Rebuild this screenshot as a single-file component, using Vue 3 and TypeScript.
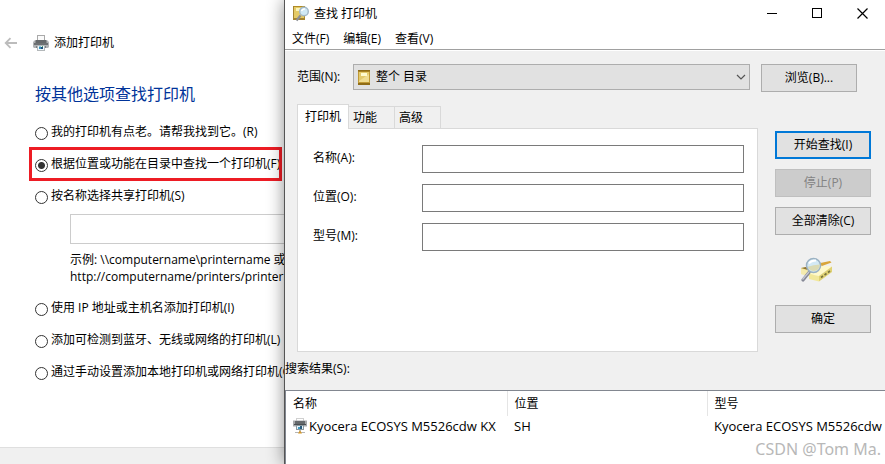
<script setup lang="ts">
import { ref } from 'vue'

interface Field {
  id: string
  label: string
}

interface Printer {
  name: string
  location: string
  model: string
}

const method = ref('directory')
const shareName = ref('')
const scope = ref('all')
const activeTab = ref('打印机')

const tabs = ['打印机', '功能', '高级']
const menus = ['文件(F)', '编辑(E)', '查看(V)']
const fields: Field[] = [
  { id: 'name', label: '名称(A):' },
  { id: 'location', label: '位置(O):' },
  { id: 'model', label: '型号(M):' },
]
const values = ref<Record<string, string>>({ name: '', location: '', model: '' })
const printers: Printer[] = [
  { name: 'Kyocera ECOSYS M5526cdw KX', location: 'SH', model: 'Kyocera ECOSYS M5526cdw KX' },
]

function clearAll(): void {
  values.value = { name: '', location: '', model: '' }
}
</script>

<template>
  <main class="desktop">
    <section class="wizard">
      <header class="wizard-head">
        <button class="back" type="button" aria-label="返回">
          <svg width="14" height="12" viewBox="0 0 14 12"><path d="M13 6H2M6.500 1.200L1.700 6l4.800 4.800" fill="none" stroke="#bcbcbc" stroke-width="1.800" /></svg>
        </button>
        <svg width="16" height="16" viewBox="0 0 16 16">
          <rect x="4.500" y=".5" width="7" height="6" fill="#fafafa" stroke="#a9a9a9" />
          <path d="M1 5.500h2v2h10v-2h2l1 2V12l-1 1H1l-1-1V7.500z" fill="#b1b3b5" />
          <rect x="2.500" y="5" width="11" height="4" fill="#66696b" />
          <rect x="1" y="8" width="14" height="2" fill="#6e7173" />
          <path d="M3 11h10v2H3z" fill="#7c8083" />
          <rect x="4.500" y="10.500" width="7" height="5" fill="#eef7fc" stroke="#b4b8ba" />
          <path d="M6 11.500h2V14H6z" fill="#3793bd" /><path d="M8 12h2v2H8z" fill="#214f78" /><path d="M9 11h1v1H9z" fill="#50a66b" />
        </svg>
        <span>添加打印机</span>
      </header>
      <h1>按其他选项查找打印机</h1>
      <form class="options" @submit.prevent>
        <label class="option"><input v-model="method" type="radio" name="method" value="old" /><span>我的打印机有点老。请帮我找到它。(R)</span></label>
        <label class="option marked"><input v-model="method" type="radio" name="method" value="directory" /><span>根据位置或功能在目录中查找一个打印机(F)</span></label>
        <div>
          <label class="option"><input v-model="method" type="radio" name="method" value="shared" /><span>按名称选择共享打印机(S)</span></label>
          <div class="share">
            <input v-model="shareName" type="text" aria-label="共享打印机名称" />
            <p>示例: \\computername\printername 或<br />http://computername/printers/printername/.printer</p>
          </div>
        </div>
        <label class="option"><input v-model="method" type="radio" name="method" value="ip" /><span>使用 IP 地址或主机名添加打印机(I)</span></label>
        <label class="option"><input v-model="method" type="radio" name="method" value="wireless" /><span>添加可检测到蓝牙、无线或网络的打印机(L)</span></label>
        <label class="option"><input v-model="method" type="radio" name="method" value="manual" /><span>通过手动设置添加本地打印机或网络打印机(O)</span></label>
      </form>
      <footer class="wizard-foot"></footer>
    </section>

    <section class="finder">
      <header class="titlebar">
        <svg width="17" height="17" viewBox="0 0 17 17">
          <path d="M0 1h12v14H0z" fill="#b28b22" />
          <path d="M1 2h10v11H1z" fill="#e4ca67" />
          <path d="M0 1h1v14H0zM0 13h12v2H0z" fill="#a58430" />
          <rect x="3" y="3" width="6" height="3" fill="#fbf4ba" />
          <path d="M7.500 10.500L3.500 15.500" stroke="#8b8e94" stroke-width="2.200" />
          <circle cx="11" cy="6.500" r="4.300" fill="#d0e9f5" stroke="#a2b8c7" stroke-width="1.400" />
          <path d="M8.500 6q1-2.500 3.500-2" fill="none" stroke="#fff" stroke-width="1.500" />
        </svg>
        <h2>查找 打印机</h2>
        <div class="window-buttons">
          <button type="button" aria-label="最小化"><svg width="11" height="11" viewBox="0 0 11 11"><path d="M0 5.500h10" stroke="#000" /></svg></button>
          <button type="button" aria-label="最大化"><svg width="11" height="11" viewBox="0 0 11 11"><rect x=".5" y=".5" width="9" height="9" fill="none" stroke="#000" /></svg></button>
          <button type="button" aria-label="关闭"><svg width="11" height="11" viewBox="0 0 11 11"><path d="M.5.5l10 10M10.500.5l-10 10" stroke="#000" stroke-width="1.200" /></svg></button>
        </div>
      </header>
      <nav class="menubar">
        <button v-for="menu in menus" :key="menu" type="button">{{ menu }}</button>
      </nav>

      <div class="scope">
        <label for="scope">范围(N):</label>
        <div class="scope-select">
          <select id="scope" v-model="scope"><option value="all">整个 目录</option></select>
          <svg class="book" width="12" height="15" viewBox="0 0 12 15">
            <path d="M0 0h12v15H0z" fill="#c09a35" />
            <path d="M1 2h10v10H1z" fill="#e4ca6c" /><path d="M1 11L11 4v8H1z" fill="#f0dc91" />
            <path d="M0 0h12v1.500H0zM0 13h12v2H0z" fill="#906c16" />
            <rect x="3" y="3" width="6" height="3" fill="#fffbd0" />
          </svg>
          <svg class="chevron" width="10" height="6" viewBox="0 0 10 6"><path d="M1 1l4 4 4-4" fill="none" stroke="#555" stroke-width="1.200" /></svg>
        </div>
        <button class="push" type="button">浏览(B)...</button>
      </div>

      <div class="query">
        <div class="criteria">
          <div class="tabs" role="tablist">
            <button v-for="tab in tabs" :key="tab" type="button" role="tab" :aria-selected="tab === activeTab" :class="{ active: tab === activeTab }" @click="activeTab = tab">{{ tab }}</button>
          </div>
          <div class="panel" role="tabpanel">
            <div v-for="field in fields" :key="field.id" class="field">
              <label :for="field.id">{{ field.label }}</label>
              <input :id="field.id" v-model="values[field.id]" type="text" />
            </div>
          </div>
        </div>
        <div class="actions">
          <button class="push primary" type="button">开始查找(I)</button>
          <button class="push" type="button" disabled>停止(P)</button>
          <button class="push" type="button" @click="clearAll">全部清除(C)</button>
          <svg class="search-art" width="32" height="26" viewBox="0 0 32 26">
            <path d="M0 11l12-2 12 1-12 9-12-2z" fill="#f3e69d" />
            <path d="M0 11l10-2 2 1-5 3z" fill="#8d7230" />
            <path d="M0 12l8 2v5l-8-2z" fill="#f4ebae" />
            <path d="M17 6.500L29 4l1.500 1.500L21 9z" fill="#d9a53a" />
            <path d="M8 17l14-8 9 .5L18 19z" fill="#fff9ca" />
            <path d="M8 17l10 2v5.500L8 22z" fill="#f2e89a" />
            <path d="M18 19l13-9.500V15l-13 9.500z" fill="#dfd173" />
            <path d="M20 20.500l2-1.500m1.500-1l2-1.500M27 15.500l2-1.500" stroke="#77733d" stroke-width="1.600" />
            <path d="M8 15.500L2 23" stroke="#858895" stroke-width="3.200" stroke-linecap="round" />
            <path d="M8 15L1.500 22.500" stroke="#c5c8d2" stroke-width="1.300" />
            <circle cx="12.500" cy="8.500" r="7" fill="#cfe8f5" fill-opacity=".9" stroke="#9bb2c3" stroke-width="1.500" />
            <path d="M6.800 10q5-2.500 12-2.500 0 6-6 6.500-4 0-6-4" fill="#dadab4" />
            <path d="M8 6.500q2-3 7-3" fill="none" stroke="#fff" stroke-width="2" />
          </svg>
          <button class="push" type="button">确定</button>
        </div>
      </div>

      <h3>搜索结果(S):</h3>
      <div class="results">
        <table>
          <thead>
            <tr><th>名称</th><th>位置</th><th>型号</th></tr>
          </thead>
          <tbody>
            <tr v-for="printer in printers" :key="printer.name">
              <td>
                <span class="printer-name">
                  <svg width="14" height="16" viewBox="0 0 14 16">
                    <rect x="3.500" y=".5" width="7" height="4" fill="#fff" stroke="#d0d0d0" />
                    <path d="M0 2.500h14v6H0z" fill="#a8aaac" /><path d="M2 3h10v3H2z" fill="#64686b" /><path d="M1 6h12v1H1z" fill="#4a4e51" />
                    <rect x="3.500" y="7.500" width="7" height="4" fill="#e6f4fa" stroke="#8b979e" />
                    <path d="M5 9h2v2H5z" fill="#409ac0" /><path d="M7 8h2v3H7z" fill="#285a7c" />
                    <path d="M2 14.500h10" stroke="#b5b5b5" /><path d="M7 12v2" stroke="#777" />
                    <path d="M5 15.500L7 12.500l2 3z" fill="#d99a25" />
                  </svg>
                  {{ printer.name }}
                </span>
              </td>
              <td>{{ printer.location }}</td>
              <td>{{ printer.model }}</td>
            </tr>
          </tbody>
        </table>
      </div>
    </section>
    <div class="watermark">CSDN @Tom Ma.</div>
  </main>
</template>

<style>
body {
  margin: 0;
}
</style>

<style scoped>
.desktop {
  position: relative;
  height: 100vh;
  overflow: hidden;
  background: #fff;
  color: #000;
  font: 12px/16px "Open Sans", "Noto Sans CJK SC", sans-serif;
}

.desktop * {
  box-sizing: border-box;
}

button,
input,
select {
  margin: 0;
  padding: 0;
  border: 0;
  border-radius: 0;
  background: none;
  color: inherit;
  font: inherit;
}

svg {
  display: block;
  flex: none;
}

h1,
h2,
h3,
p {
  margin: 0;
  font-size: inherit;
  font-weight: 400;
}

.wizard {
  display: flex;
  flex-direction: column;
  width: 75%;
  height: 100%;
  padding-top: 35px;
  white-space: nowrap;
}

.wizard-head {
  display: flex;
  align-items: center;
  gap: 5px;
  padding-left: 4px;
}

.back {
  width: 24px;
}

.wizard h1 {
  margin-top: 31px;
  padding-left: 35px;
  color: #003399;
  font-size: 16px;
  line-height: 24px;
}

.options {
  display: flex;
  flex-direction: column;
  align-items: flex-start;
  gap: 16px;
  margin-top: 19px;
  padding-left: 35px;
}

.option {
  position: relative;
  display: flex;
  align-items: center;
  gap: 3px;
  height: 16px;
}

.option input {
  appearance: none;
  flex: none;
  width: 13px;
  height: 13px;
  border: 1px solid #333;
  border-radius: 50%;
}

.option input:checked {
  background: radial-gradient(circle, #333 0 3px, transparent 4px);
}

.option span {
  padding-bottom: 2px;
}

.marked::after {
  content: "";
  position: absolute;
  inset: -10px -2px -8px -6px;
  border: 3px solid #ed1c24;
}

.share {
  width: 400px;
  margin: 9px 0 0 35px;
}

.share input {
  display: block;
  width: 100%;
  height: 30px;
  margin-bottom: 7px;
  border: 1px solid #ccc;
}

.share p {
  line-height: 17px;
}

.wizard-foot {
  height: 17px;
  margin-top: auto;
  border-top: 1px solid #dfdfdf;
  background: #f0f0f0;
}

.finder {
  position: absolute;
  inset: 0 0 0 284px;
  display: flex;
  flex-direction: column;
  border-left: 1px solid #555;
  background: #f0f0f0;
  box-shadow: 0 0 16px rgba(0, 0, 0, 0.45);
}

.titlebar {
  display: flex;
  align-items: center;
  gap: 4px;
  height: 27px;
  padding-left: 8px;
  background: #fff;
}

.window-buttons {
  display: flex;
  margin-left: auto;
}

.window-buttons button {
  display: grid;
  place-items: center;
  width: 45px;
  height: 26px;
}

.menubar {
  display: flex;
  gap: 14px;
  height: 23px;
  padding: 2px 7px 0;
  border-bottom: 1px solid #a0a0a0;
  background: #fff;
}

.scope {
  display: flex;
  align-items: flex-start;
  padding: 13px 28px 0 12px;
  border-top: 1px solid #fff;
}

.scope label {
  width: 56px;
  padding-top: 5px;
}

.scope-select {
  position: relative;
  flex: 1;
  margin-right: 11px;
}

.scope-select select {
  appearance: none;
  display: block;
  width: 100%;
  height: 26px;
  padding-left: 22px;
  border: 1px solid #adadad;
  background: #e1e1e1;
}

.book {
  position: absolute;
  top: 6px;
  left: 5px;
}

.chevron {
  position: absolute;
  top: 10px;
  right: 4px;
}

.push {
  width: 96px;
  height: 28px;
  border: 1px solid #adadad;
  background: #e1e1e1;
}

.push:disabled {
  border-color: #bfbfbf;
  background: #ccc;
  color: #838383;
}

.primary {
  border: 2px solid #0078d7;
}

.query {
  display: flex;
  gap: 17px;
  padding: 12px 14px 0 12px;
}

.criteria {
  display: flex;
  flex: 1;
  flex-direction: column;
}

.tabs {
  display: flex;
  align-items: flex-end;
}

.tabs button {
  width: 46px;
  height: 22px;
  padding-right: 13px;
  border: 1px solid #d9d9d9;
  border-width: 1px 1px 0 0;
}

.tabs .active {
  position: relative;
  width: 52px;
  height: 25px;
  margin-bottom: -1px;
  padding: 0;
  border-left-width: 1px;
  background: #fff;
}

.panel {
  display: flex;
  flex: 1;
  flex-direction: column;
  gap: 11px;
  padding: 16px 13px 0 15px;
  border: 1px solid #d9d9d9;
  background: #fff;
}

.field {
  display: flex;
}

.field label {
  width: 109px;
  padding-top: 5px;
}

.field input {
  flex: 1;
  min-width: 0;
  height: 28px;
  border: 1px solid #7a7a7a;
}

.actions {
  display: flex;
  flex-direction: column;
  gap: 10px;
  padding: 27px 0 19px;
}

.search-art {
  margin: 12px auto 12px 26px;
}

.finder h3 {
  padding: 9px 0 13px;
}

.results {
  flex: 1;
  overflow: hidden;
  border: 1px solid #828790;
  border-width: 1px 0 0 1px;
  background: #fff;
}

table {
  width: 680px;
  table-layout: fixed;
  border-collapse: collapse;
  white-space: nowrap;
}

th,
td {
  padding: 0 0 0 7px;
  text-align: left;
  font-weight: 400;
}

th {
  height: 25px;
  border-right: 1px solid #e5e5e5;
}

th:first-child {
  width: 221px;
}

th:nth-child(2) {
  width: 200px;
}

td {
  height: 20px;
  font-size: 13px;
}

.printer-name {
  display: flex;
  align-items: center;
  gap: 2px;
}

.watermark {
  position: absolute;
  right: 4px;
  bottom: 5px;
  color: #b8b8b8;
  font: 16px/20px "Noto Sans", sans-serif;
  text-shadow: 1px 1px 1px #fff;
}
</style>
